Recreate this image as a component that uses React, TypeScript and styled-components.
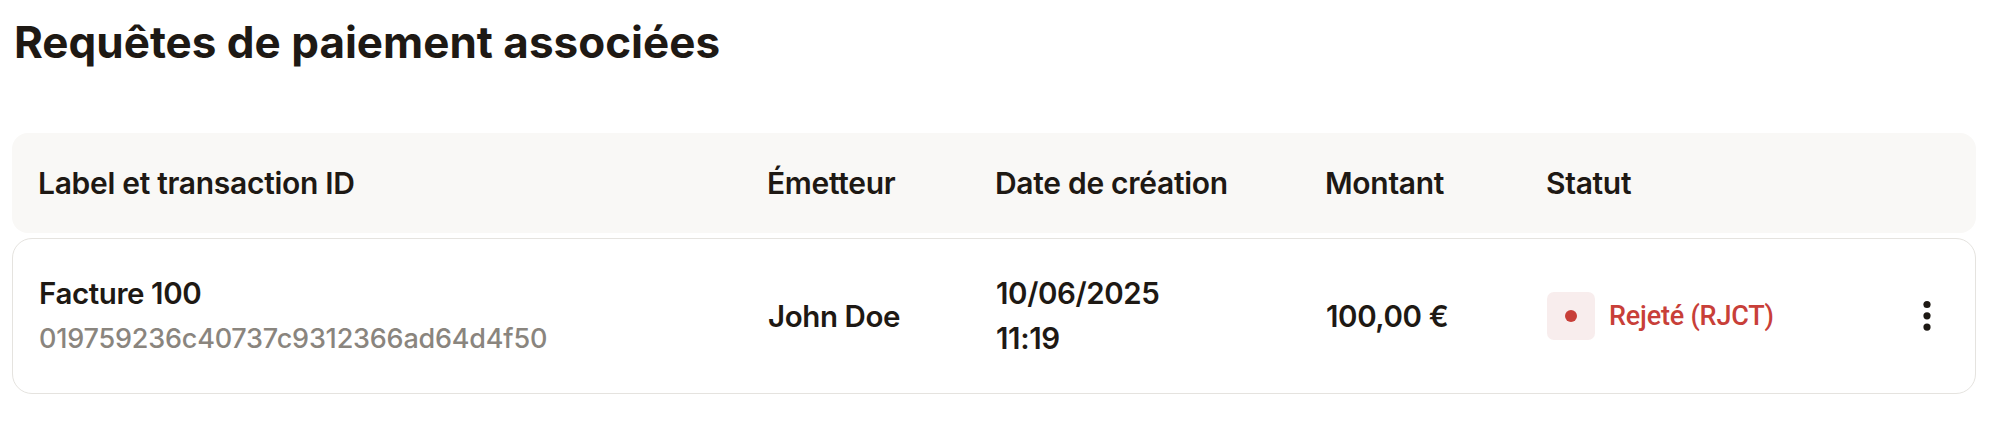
import React from "react";
import styled, { createGlobalStyle } from "styled-components";

const GlobalStyle = createGlobalStyle`
  html, body { margin: 0; padding: 0; background: #ffffff; }
  body { font-family: Inter, "Noto Sans", sans-serif; color: #1e1914; }
  * { box-sizing: border-box; }
`;

const Page = styled.div`
  padding: 15px 16px 0 12px;
`;

const Title = styled.h2`
  margin: 0 0 0 2px;
  font-family: Inter, "Noto Sans", sans-serif;
  font-weight: 700;
  font-size: 44px;
  line-height: normal;
  letter-spacing: 0;
  color: #1e1914;
`;

const Table = styled.div`
  margin-top: 64px;
  display: flex;
  flex-direction: column;
  gap: 5px;
`;

const cols = "729px 228px 330px 221px 1fr 48px";

const HeaderRow = styled.div`
  display: grid;
  grid-template-columns: ${cols};
  align-items: center;
  height: 100px;
  padding: 0 25px 0 26px;
  background: #f9f8f6;
  border-radius: 16px;
`;

const HeadCell = styled.div`
  font-size: 30px;
  font-weight: 600;
  letter-spacing: -0.3px;
  color: #1e1914;
`;

const BodyRow = styled.div`
  display: grid;
  grid-template-columns: ${cols};
  align-items: center;
  height: 156px;
  padding: 0 24px 0 26px;
  border: 1.5px solid #e5e3df;
  border-radius: 20px;
  background: #ffffff;
`;

const Cell = styled.div`
  display: flex;
  flex-direction: column;
  font-size: 29.5px;
  line-height: 45px;
  font-weight: 600;
  letter-spacing: -0.4px;
  color: #1e1914;
`;

const Muted = styled.span`
  font-size: 27px;
  font-weight: 500;
  color: #8a857e;
  letter-spacing: -0.2px;
`;

const Status = styled.div`
  display: flex;
  align-items: center;
  gap: 14px;
`;

const StatusIcon = styled.div`
  width: 48px;
  height: 48px;
  border-radius: 7px;
  background: #f8eded;
  display: flex;
  align-items: center;
  justify-content: center;
  &::after {
    content: "";
    width: 12px;
    height: 12px;
    border-radius: 50%;
    background: #c83f39;
  }
`;

const StatusText = styled.span`
  font-family: Roboto, "Noto Sans", sans-serif;
  font-size: 27px;
  font-weight: 500;
  color: #c83f39;
  letter-spacing: -0.2px;
`;

const ActionButton = styled.button`
  justify-self: center;
  width: 40px;
  height: 48px;
  border: none;
  background: transparent;
  padding: 0;
  display: flex;
  align-items: center;
  justify-content: center;
  cursor: pointer;
`;

const Kebab = () => (
  <svg width="8" height="32" viewBox="0 0 8 32" aria-hidden>
    <circle cx="4" cy="4.5" r="3.6" fill="#1e1914" />
    <circle cx="4" cy="15.8" r="3.6" fill="#1e1914" />
    <circle cx="4" cy="27.1" r="3.6" fill="#1e1914" />
  </svg>
);

export default function App() {
  return (
    <Page>
      <GlobalStyle />
      <Title>Requêtes de paiement associées</Title>
      <Table>
        <HeaderRow>
          <HeadCell>Label et transaction ID</HeadCell>
          <HeadCell>Émetteur</HeadCell>
          <HeadCell>Date de création</HeadCell>
          <HeadCell>Montant</HeadCell>
          <HeadCell>Statut</HeadCell>
          <HeadCell />
        </HeaderRow>
        <BodyRow>
          <Cell>
            <span>Facture 100</span>
            <Muted>019759236c40737c9312366ad64d4f50</Muted>
          </Cell>
          <Cell>John Doe</Cell>
          <Cell>
            <span>10/06/2025</span>
            <span>11:19</span>
          </Cell>
          <Cell>100,00 €</Cell>
          <Status>
            <StatusIcon />
            <StatusText>Rejeté (RJCT)</StatusText>
          </Status>
          <ActionButton aria-label="Actions">
            <Kebab />
          </ActionButton>
        </BodyRow>
      </Table>
    </Page>
  );
}
